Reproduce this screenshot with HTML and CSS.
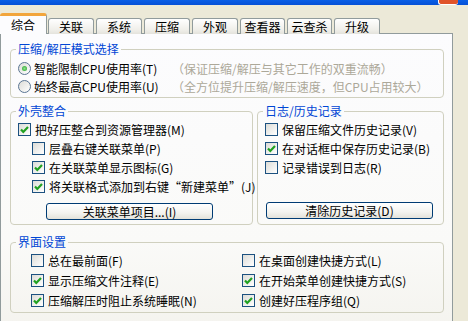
FILE: index.html
```html
<!DOCTYPE html>
<html lang="zh-CN">
<head>
    <meta charset="UTF-8">
    <title>好压 设置</title>
    <link rel="stylesheet" href="styles.css">
</head>
<body>
    <div class="titlebar">
        <div class="close-btn"></div>
    </div>

    <div class="tabs">
        <div class="tab active">综合</div>
        <div class="tab">关联</div>
        <div class="tab">系统</div>
        <div class="tab">压缩</div>
        <div class="tab">外观</div>
        <div class="tab tab-wide">查看器</div>
        <div class="tab tab-wide">云查杀</div>
        <div class="tab">升级</div>
    </div>

    <div class="panel">
        <fieldset class="group group-mode">
            <legend>压缩/解压模式选择</legend>
            <div class="radio-row">
                <span class="radio checked"></span>
                <span class="mode-label">智能限制CPU使用率(T)</span>
                <span class="hint">（保证压缩/解压与其它工作的双重流畅）</span>
            </div>
            <div class="radio-row">
                <span class="radio"></span>
                <span class="mode-label">始终最高CPU使用率(U)</span>
                <span class="hint">（全方位提升压缩/解压速度，但CPU占用较大）</span>
            </div>
        </fieldset>

        <div class="split">
            <fieldset class="group group-shell">
                <legend>外壳整合</legend>
                <div class="check-row">
                    <span class="check checked"><svg viewBox="0 0 11 11"><polyline points="2,5.5 4.3,8 9,3"/></svg></span>
                    把好压整合到资源管理器(M)
                </div>
                <div class="check-row sub">
                    <span class="check"></span>
                    层叠右键关联菜单(P)
                </div>
                <div class="check-row sub">
                    <span class="check checked"><svg viewBox="0 0 11 11"><polyline points="2,5.5 4.3,8 9,3"/></svg></span>
                    在关联菜单显示图标(G)
                </div>
                <div class="check-row sub">
                    <span class="check checked"><svg viewBox="0 0 11 11"><polyline points="2,5.5 4.3,8 9,3"/></svg></span>
                    将关联格式添加到右键“新建菜单”(J)
                </div>
                <button class="xp-btn btn-shell">关联菜单项目...(I)</button>
            </fieldset>

            <fieldset class="group group-log">
                <legend>日志/历史记录</legend>
                <div class="check-row">
                    <span class="check"></span>
                    保留压缩文件历史记录(V)
                </div>
                <div class="check-row">
                    <span class="check checked"><svg viewBox="0 0 11 11"><polyline points="2,5.5 4.3,8 9,3"/></svg></span>
                    在对话框中保存历史记录(B)
                </div>
                <div class="check-row">
                    <span class="check"></span>
                    记录错误到日志(R)
                </div>
                <button class="xp-btn btn-log">清除历史记录(D)</button>
            </fieldset>
        </div>

        <fieldset class="group group-ui">
            <legend>界面设置</legend>
            <div class="ui-grid">
                <div class="check-row">
                    <span class="check"></span>
                    总在最前面(F)
                </div>
                <div class="check-row">
                    <span class="check"></span>
                    在桌面创建快捷方式(L)
                </div>
                <div class="check-row">
                    <span class="check checked"><svg viewBox="0 0 11 11"><polyline points="2,5.5 4.3,8 9,3"/></svg></span>
                    显示压缩文件注释(E)
                </div>
                <div class="check-row">
                    <span class="check checked"><svg viewBox="0 0 11 11"><polyline points="2,5.5 4.3,8 9,3"/></svg></span>
                    在开始菜单创建快捷方式(S)
                </div>
                <div class="check-row">
                    <span class="check checked"><svg viewBox="0 0 11 11"><polyline points="2,5.5 4.3,8 9,3"/></svg></span>
                    压缩解压时阻止系统睡眠(N)
                </div>
                <div class="check-row">
                    <span class="check checked"><svg viewBox="0 0 11 11"><polyline points="2,5.5 4.3,8 9,3"/></svg></span>
                    创建好压程序组(Q)
                </div>
            </div>
        </fieldset>
    </div>
</body>
</html>
```

FILE: styles.css
```css
body {
    margin: 0;
    width: 468px;
    height: 321px;
    overflow: hidden;
    background-color: #ece9d8;
    font-family: "Noto Sans CJK SC", "Liberation Sans", sans-serif;
    font-size: 12px;
    color: #000;
}

/* window title strip */
.titlebar {
    height: 5px;
    background: linear-gradient(#0a5fe6, #0650d6);
    display: flex;
    justify-content: flex-end;
    padding-right: 10px;
}

.close-btn {
    width: 19px;
    height: 4px;
    background-color: #e0532a;
    border-left: 1px solid #fff;
    border-bottom: 1px solid #fff;
    border-bottom-left-radius: 3px;
    border-bottom-right-radius: 3px;
}

/* tabs */
.tabs {
    display: flex;
    align-items: flex-end;
    height: 21px;
    margin-top: 8px;
    margin-bottom: -1px;
}

.tab {
    width: 46px;
    height: 16px;
    margin-left: 2px;
    box-sizing: border-box;
    border: 1px solid #919b9c;
    border-bottom: none;
    border-radius: 3px 3px 0 0;
    background: linear-gradient(#ffffff, #f0efea 70%, #e4e3dc);
    text-align: center;
    line-height: 16px;
}

.tab-wide {
    width: 45px;
}

.tab.active {
    width: 47px;
    height: 21px;
    margin-left: 0;
    margin-right: -1px;
    border-top: 3px solid #f2a53c;
    border-left: none;
    background: #fcfcfe;
    line-height: 17px;
    position: relative;
    z-index: 1;
}

/* panel */
.panel {
    width: 453px;
    height: 300px;
    box-sizing: border-box;
    border: 1px solid #919b9c;
    background: linear-gradient(#fcfcfe, #fafaf8 70%, #f4f3ee);
    padding: 8px 8px 0 9px;
}

.group {
    margin: 0;
    padding: 0;
    min-width: 0;
    border: 1px solid #d0d0bf;
    border-radius: 4px;
}

.group legend {
    margin-left: 5px;
    padding: 0 2px;
    line-height: 14px;
    color: #0046d5;
}

.group-mode {
    padding: 3px 0 2px;
}

.radio-row {
    display: flex;
    align-items: center;
    height: 18px;
    padding-left: 7px;
}

.radio {
    width: 13px;
    height: 13px;
    box-sizing: border-box;
    border: 1px solid #5a7593;
    border-radius: 50%;
    background: linear-gradient(135deg, #dcdcd7, #ffffff);
    margin-right: 3px;
    display: flex;
    align-items: center;
    justify-content: center;
}

.radio.checked::after {
    content: "";
    width: 5px;
    height: 5px;
    border-radius: 50%;
    background: radial-gradient(#8fe08f, #21a121);
}

.mode-label {
    width: 138px;
}

.hint {
    color: #aca899;
}

.split {
    display: flex;
    gap: 4px;
    margin-top: 6px;
}

.group-shell {
    width: 243px;
    box-sizing: border-box;
    padding: 2px 0 4px;
}

.group-log {
    flex: 1;
    display: flex;
    flex-direction: column;
    padding: 2px 0 5px;
}

.check-row {
    display: flex;
    align-items: center;
    height: 19px;
    padding-left: 7px;
    white-space: nowrap;
}

.check-row.sub {
    padding-left: 21px;
}

.check {
    width: 13px;
    height: 13px;
    box-sizing: border-box;
    border: 1px solid #1c5180;
    background: linear-gradient(135deg, #dcdcd7, #ffffff);
    margin-right: 4px;
    flex-shrink: 0;
}

.check svg {
    display: block;
    width: 11px;
    height: 11px;
}

.check polyline {
    fill: none;
    stroke: #21a121;
    stroke-width: 2.2;
}

.xp-btn {
    display: block;
    width: 167px;
    height: 17px;
    padding: 0;
    border: 1px solid #003c74;
    border-radius: 3px;
    background: linear-gradient(#ffffff, #f3f3ef 60%, #e3e2da);
    font-family: inherit;
    font-size: 12px;
    line-height: 15px;
    color: #000;
}

.btn-shell {
    margin: 7px 0 0 35px;
}

.btn-log {
    margin: auto 0 0 8px;
}

.group-ui {
    margin-top: 10px;
    padding: 2px 0 1px;
}

.ui-grid {
    display: grid;
    grid-template-columns: 211px 1fr;
    grid-auto-rows: 20px;
    padding-left: 13px;
}
```
